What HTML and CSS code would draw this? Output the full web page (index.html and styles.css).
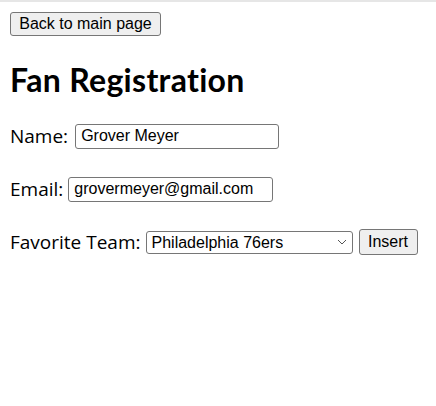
FILE: index.html
```html
<!DOCTYPE html>
<html>
<head>
<meta charset="utf-8">
<link rel="stylesheet" href="styles.css">
</head>
<body>
<div class="page">
  <button class="btn back">Back to main page</button>
  <h1 class="title">Fan Registration</h1>
  <form class="form">
    <div class="row"><label>Name:</label> <input class="field name" type="text" value="Grover Meyer"></div>
    <div class="row"><label>Email:</label> <input class="field email" type="text" value="grovermeyer@gmail.com"></div>
    <div class="row"><label>Favorite Team:</label>
      <select class="field team"><option>Philadelphia 76ers</option></select>
      <button type="button" class="btn insert">Insert</button>
    </div>
  </form>
</div>
</body>
</html>
```

FILE: styles.css
```css
html, body { margin: 0; padding: 0; background: #fff; }
body { border-top: 2px solid #e6e6e6; }
.page {
  padding: 10px 10px;
  font-family: "Open Sans", "Noto Sans", sans-serif;
  color: #000;
}
.btn {
  font-family: "Liberation Sans", Arial, sans-serif;
  font-size: 16px;
  background: #efefef;
  border: 1px solid #767676;
  border-radius: 3px;
  padding: 1px 7px;
  color: #000;
  height: 24px;
  box-sizing: border-box;
}
.back { width: 151px; }
.title {
  font-family: "Lato", "Open Sans", sans-serif;
  font-size: 32px;
  font-weight: 700;
  margin: 24px 0 22px 0;
  line-height: 40px;
  letter-spacing: 0.3px;
}
.form { display: flex; flex-direction: column; gap: 25px; }
.row { display: flex; align-items: center; font-size: 19px; line-height: 28px; gap: 5px; height: 28px; }
.field {
  font-family: "Liberation Sans", Arial, sans-serif;
  font-size: 16px;
  border: 1px solid #767676;
  border-radius: 3px;
  height: 25px;
  box-sizing: border-box;
  padding: 1px 5px;
  color: #000;
  background: #fff;
}
.name { width: 204px; margin-left: 2px; }
.email { width: 205px; }
.team {
  width: 207px;
  height: 23px;
  appearance: none;
  -webkit-appearance: none;
  padding-left: 5px;
  background-image: url("data:image/svg+xml;utf8,<svg xmlns='http://www.w3.org/2000/svg' width='10' height='6' viewBox='0 0 10 6'><path d='M1 1 L5 5 L9 1' fill='none' stroke='%23555' stroke-width='1'/></svg>");
  background-repeat: no-repeat;
  background-position: right 5px center;
}
.insert { margin-left: 1px; width: 59px; height: 26px; padding: 1px 6px; }
```
